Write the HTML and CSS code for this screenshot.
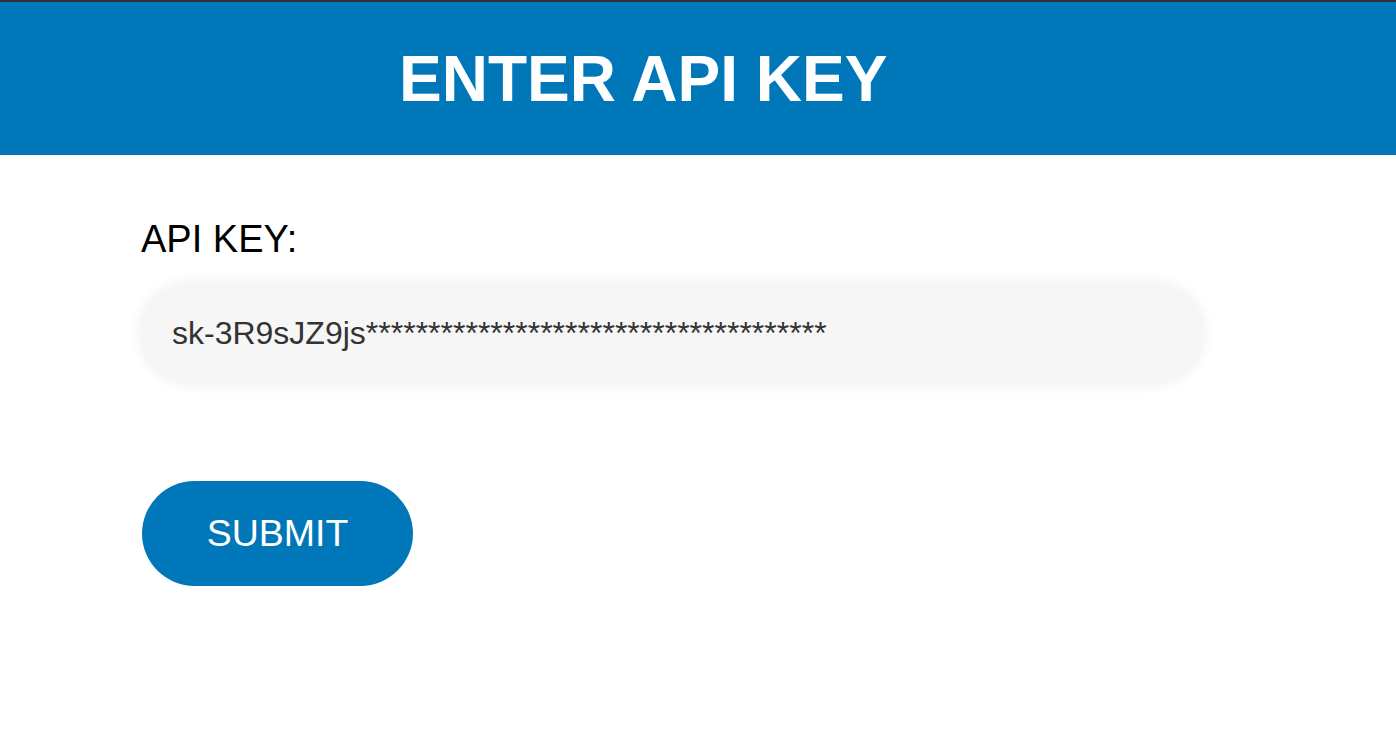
FILE: index.html
```html
<!DOCTYPE html>
<html lang="en">
<head>
<meta charset="utf-8">
<title>Enter API Key</title>
<link rel="stylesheet" href="styles.css">
</head>
<body>
<header class="topbar">
  <h1 class="title">ENTER API KEY</h1>
</header>
<main class="content">
  <form class="key-form">
    <label class="label" for="apikey">API KEY:</label>
    <input class="key-input" id="apikey" type="text" value="sk-3R9sJZ9js*************************************">
    <button class="submit" type="button">SUBMIT</button>
  </form>
</main>
</body>
</html>
```
FILE: styles.css
```css
html, body {
  margin: 0;
  padding: 0;
  background: #ffffff;
}
body {
  font-family: "Liberation Sans", Arial, Helvetica, sans-serif;
  color: #000;
}
.topbar {
  border-top: 2px solid #2b303b;
  background: #0077b9;
  height: 153px;
  display: flex;
  align-items: center;
  padding-left: 399px;
}
.title {
  margin: 0;
  color: #fff;
  font-size: 64px;
  font-weight: 700;
  line-height: 1.15;
  position: relative;
  top: 1px;
}
.content {
  padding: 63px 0 0 142px;
}
.key-form {
  display: flex;
  flex-direction: column;
  align-items: flex-start;
}
.label {
  font-size: 38px;
  line-height: 1.15;
  color: #000;
  margin-left: -1px;
}
.key-input {
  margin-top: 23px;
  box-sizing: border-box;
  width: 1060px;
  height: 97px;
  border: none;
  outline: none;
  border-radius: 49px;
  background: #f6f6f6;
  box-shadow: 0 0 16px rgba(0, 0, 0, 0.09);
  padding: 0 30px;
  font-family: "Liberation Sans", Arial, Helvetica, sans-serif;
  font-size: 32px;
  color: #333;
}
.submit {
  margin-top: 99px;
  width: 271px;
  height: 105px;
  border: none;
  border-radius: 53px;
  background: #0077b9;
  color: #fff;
  font-family: "Liberation Sans", Arial, Helvetica, sans-serif;
  font-size: 37.5px;
  cursor: pointer;
  padding: 0;
}
```
